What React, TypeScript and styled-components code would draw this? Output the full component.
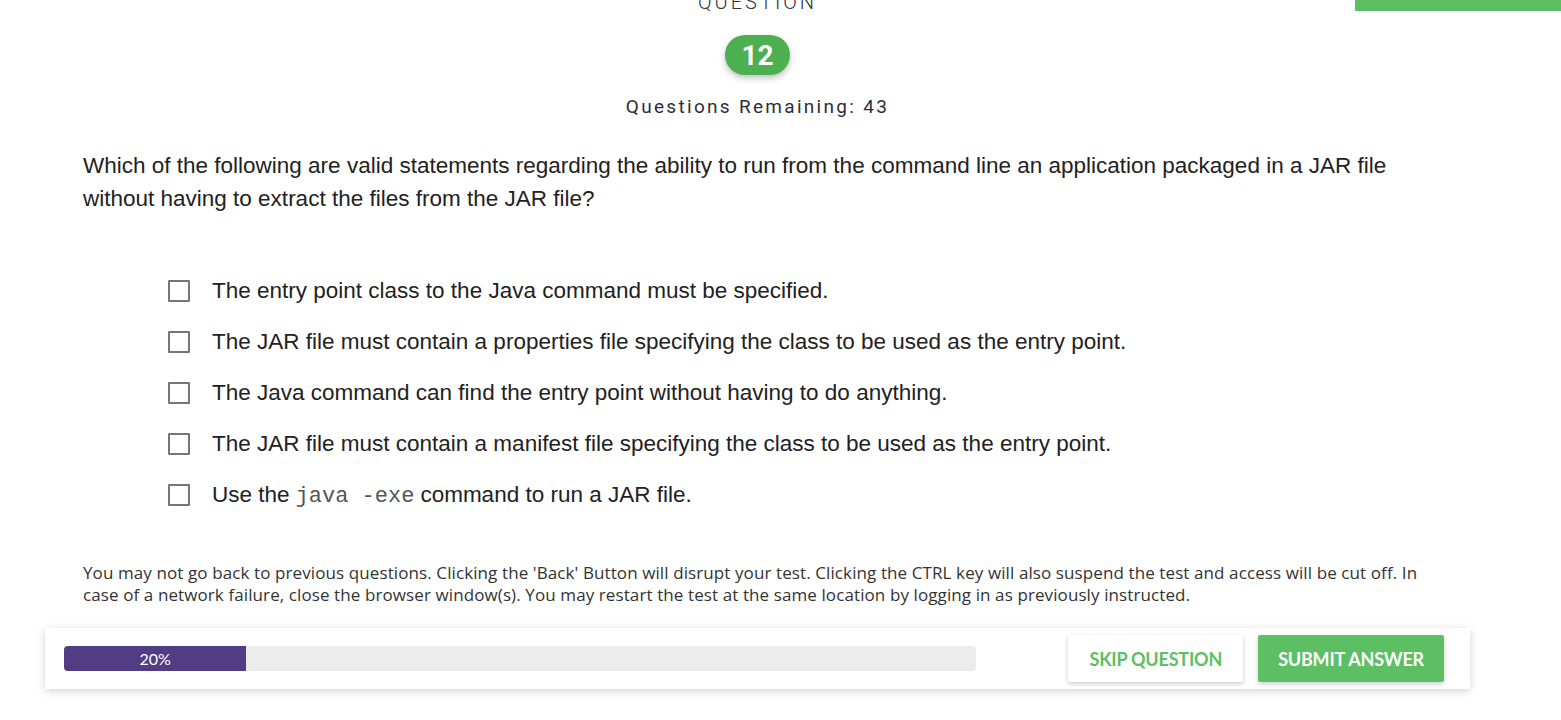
import React from "react";
import styled, { createGlobalStyle } from "styled-components";

const Global = createGlobalStyle`
  html, body { margin: 0; padding: 0; background: #fff; }
  body { font-family: "Liberation Sans", Arial, sans-serif; overflow: hidden; }
`;

const Page = styled.div`
  position: relative;
  width: 1561px;
  height: 720px;
  overflow: hidden;
`;

const CornerButton = styled.div`
  position: absolute;
  top: 0;
  right: 0;
  width: 206px;
  height: 11px;
  background: #5cbf63;
`;

const Column = styled.main`
  width: 1425px;
  margin-left: 45px;
  display: flex;
  flex-direction: column;
`;

const Header = styled.header`
  display: flex;
  flex-direction: column;
  align-items: center;
`;

const Title = styled.div`
  margin-top: -10px;
  font-family: Roboto, "Open Sans", sans-serif;
  font-weight: 300;
  font-size: 20px;
  letter-spacing: 3px;
  color: #333;
  line-height: 24px;
`;

const Badge = styled.div`
  margin-top: 21px;
  width: 65px;
  height: 40px;
  border-radius: 20px;
  background: #4caf50;
  color: #fff;
  font-family: Roboto, "Open Sans", sans-serif;
  font-weight: 700;
  font-size: 28px;
  display: flex;
  align-items: center;
  justify-content: center;
  box-shadow: 0 3px 6px rgba(0, 0, 0, 0.25);
`;

const Remaining = styled.div`
  margin-top: 20px;
  font-family: Roboto, "Open Sans", sans-serif;
  font-size: 19px;
  letter-spacing: 2.3px;
  color: #2d2d3a;
  line-height: 24px;
`;

const Body = styled.section`
  padding: 0 38px;
`;

const Question = styled.p`
  margin: 30px 0 0;
  font-size: 22.5px;
  line-height: 33px;
  color: #222;
`;

const Options = styled.ul`
  list-style: none;
  margin: 61px 0 0;
  padding: 0 0 0 85px;
  display: flex;
  flex-direction: column;
  gap: 21px;
`;

const Option = styled.li`
  display: flex;
  align-items: center;
  height: 30px;
  font-size: 22.5px;
  color: #222;
`;

const Box = styled.span`
  width: 18px;
  height: 18px;
  border: 2px solid #767676;
  border-radius: 1px;
  margin-right: 22px;
  flex: none;
`;

const Code = styled.code`
  font-family: "Liberation Mono", "Courier New", monospace;
  font-size: 22px;
  color: #555;
  margin: 0 6px;
`;

const Notice = styled.p`
  margin: 52px 0 0;
  font-family: "Open Sans", Lato, sans-serif;
  font-size: 17px;
  letter-spacing: 0.1px;
  line-height: 22px;
  color: #333;
`;

const Footer = styled.footer`
  margin-top: 22px;
  height: 61px;
  background: #fff;
  box-shadow: 0 2px 8px rgba(0, 0, 0, 0.18);
  display: flex;
  align-items: center;
  padding: 0 26px 0 19px;
  box-sizing: border-box;
`;

const Track = styled.div`
  width: 912px;
  height: 25px;
  background: #ececec;
  border-radius: 4px;
  overflow: hidden;
  display: flex;
`;

const Fill = styled.div`
  height: 100%;
  background: #523d84;
  color: #fff;
  font-family: Lato, "Open Sans", sans-serif;
  font-size: 16px;
  display: flex;
  align-items: center;
  justify-content: center;
`;

const Actions = styled.div`
  margin-left: auto;
  display: flex;
  gap: 15px;
`;

const Button = styled.button<{ $primary?: boolean }>`
  height: 47px;
  padding: 0 ${(p) => (p.$primary ? "20px" : "21px")};
  border: none;
  border-radius: 2px;
  font-family: Lato, "Open Sans", sans-serif;
  font-weight: 700;
  font-size: 18px;
  letter-spacing: -0.2px;
  text-transform: uppercase;
  cursor: pointer;
  background: ${(p) => (p.$primary ? "#5cbf63" : "#fff")};
  color: ${(p) => (p.$primary ? "#fff" : "#5cbf63")};
  box-shadow: 0 2px 5px rgba(0, 0, 0, 0.2);
`;

const options: React.ReactNode[] = [
  "The entry point class to the Java command must be specified.",
  "The JAR file must contain a properties file specifying the class to be used as the entry point.",
  "The Java command can find the entry point without having to do anything.",
  "The JAR file must contain a manifest file specifying the class to be used as the entry point.",
  <>
    Use the<Code>java -exe</Code>command to run a JAR file.
  </>,
];

export default function App() {
  const progress = 20;
  return (
    <Page>
      <Global />
      <CornerButton />
      <Column>
        <Header>
          <Title>QUESTION</Title>
          <Badge>12</Badge>
          <Remaining>Questions Remaining: 43</Remaining>
        </Header>
        <Body>
          <Question>
            Which of the following are valid statements regarding the ability to run from the
            command line an application packaged in a JAR file without having to extract the files
            from the JAR file?
          </Question>
          <Options>
            {options.map((o, i) => (
              <Option key={i}>
                <Box />
                <span>{o}</span>
              </Option>
            ))}
          </Options>
          <Notice>
            You may not go back to previous questions. Clicking the 'Back' Button will disrupt your
            test. Clicking the CTRL key will also suspend the test and access will be cut off. In case
            of a network failure, close the browser window(s). You may restart the test at the same
            location by logging in as previously instructed.
          </Notice>
        </Body>
        <Footer>
          <Track>
            <Fill style={{ width: `${progress}%` }}>{progress}%</Fill>
          </Track>
          <Actions>
            <Button>Skip Question</Button>
            <Button $primary>Submit Answer</Button>
          </Actions>
        </Footer>
      </Column>
    </Page>
  );
}
